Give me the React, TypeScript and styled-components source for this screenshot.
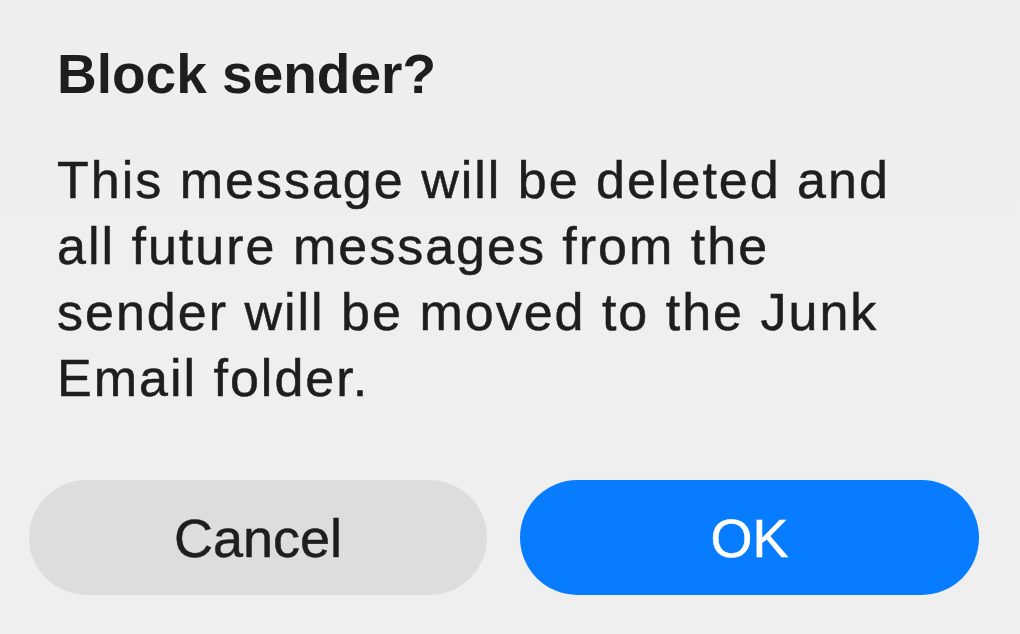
import styled, { createGlobalStyle } from "styled-components";

const GlobalStyle = createGlobalStyle`
  html, body {
    margin: 0;
    padding: 0;
    background: #efefee;
  }
  #root {
    height: 634px;
  }
`;

const Dialog = styled.div`
  display: flex;
  flex-direction: column;
  height: 634px;
  box-sizing: border-box;
  padding: 42px 0 0 0;
  background: linear-gradient(180deg, #eeeeed 0%, #f0efef 60%, #efefef 100%);
  font-family: "Liberation Sans", Arial, sans-serif;
  color: #1e1e1e;
  overflow: hidden;
`;

const Title = styled.h1`
  margin: 0 0 0 57px;
  font-size: 55px;
  line-height: 64px;
  font-weight: 700;
`;

const Message = styled.p`
  margin: 41px 0 0 57px;
  width: 930px;
  font-size: 52px;
  line-height: 66px;
  letter-spacing: 2px;
  -webkit-text-stroke: 0.5px #1e1e1e;
`;

const Actions = styled.div`
  display: grid;
  grid-template-columns: 458px 459px;
  gap: 33px;
  margin-top: 69px;
  padding-left: 29px;
`;

const Button = styled.button<{ $primary?: boolean }>`
  height: 115px;
  border: none;
  border-radius: 58px;
  background: ${(p) => (p.$primary ? "#087cff" : "#dcdddc")};
  color: ${(p) => (p.$primary ? "#ffffff" : "#1e1e1e")};
  font-family: "Liberation Sans", Arial, sans-serif;
  font-size: 54px;
  -webkit-text-stroke: 0.5px ${(p) => (p.$primary ? "#ffffff" : "#1e1e1e")};
  padding: 0;
  cursor: pointer;
`;

function App() {
  return (
    <>
      <GlobalStyle />
      <Dialog>
        <Title>Block sender?</Title>
        <Message>
          This message will be deleted and
          <br />
          all future messages from the
          <br />
          sender will be moved to the Junk
          <br />
          Email folder.
        </Message>
        <Actions>
          <Button>Cancel</Button>
          <Button $primary>OK</Button>
        </Actions>
      </Dialog>
    </>
  );
}

export default App;
